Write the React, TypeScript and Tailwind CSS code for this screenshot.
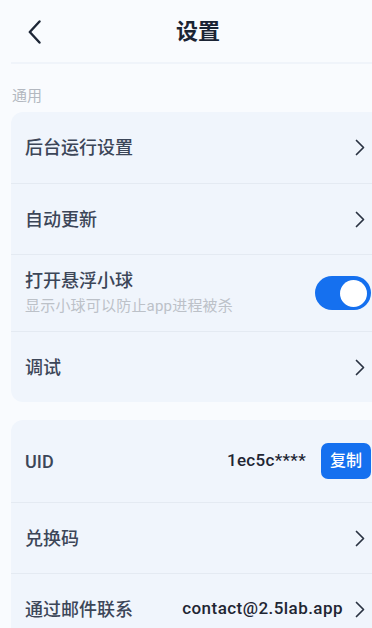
import React, { useState } from 'react';

const font = { fontFamily: 'Roboto, "Noto Sans CJK SC", sans-serif' };

function Chevron({ className = '' }: { className?: string }) {
  return (
    <svg width="10" height="17" viewBox="0 0 10 17" fill="none" className={className}>
      <path d="M1.5 1.5L8.5 8.5L1.5 15.5" stroke="#2a3342" strokeWidth="1.7" strokeLinecap="round" strokeLinejoin="round" />
    </svg>
  );
}

function Row({ label, right, h = 'h-[71px]', first = false }: { label: string; right?: React.ReactNode; h?: string; first?: boolean }) {
  return (
    <div className={`flex items-center justify-between pl-[14px] pr-[14px] ${h} ${first ? '' : 'border-t border-[#e4eaf2]'}`}>
      <span className="text-[18px] font-medium text-[#3c4658]">{label}</span>
      {right ?? <Chevron className="mr-[6px]" />}
    </div>
  );
}

export default function App() {
  const [floating, setFloating] = useState(true);

  return (
    <div className="w-full h-[628px] overflow-hidden bg-[#f9fbfe]" style={font}>
      <div className="w-[396px]">
        {/* header */}
        <div className="grid grid-cols-[60px_1fr_60px] items-center h-[62px]">
          <div className="pl-[28px] pt-[1px]">
            <svg width="13" height="24" viewBox="0 0 13 24" fill="none">
              <path d="M11.5 1.5L1.8 12L11.5 22.5" stroke="#1d2636" strokeWidth="2.4" strokeLinecap="round" strokeLinejoin="round" />
            </svg>
          </div>
          <h1 className="text-center text-[22px] font-bold text-[#1b2434]">设置</h1>
          <div />
        </div>
        <div className="mx-[11px] h-[2px] bg-[#f0f4fa]" />

        <div className="px-[12px] pt-[22px] pb-[6px] text-[15px] leading-[20px] text-[#b3b8c0]">通用</div>

        <div className="mx-[11px] rounded-[12px] bg-[#f0f5fc]">
          <Row label="后台运行设置" first />
          <Row label="自动更新" />
          <div className="flex items-center justify-between h-[77px] pl-[14px] pr-[14px] border-t border-[#e4eaf2]">
            <div className="flex flex-col gap-[3px] -mt-[2px]">
              <span className="text-[18px] leading-[24px] font-medium text-[#3c4658]">打开悬浮小球</span>
              <span className="text-[15px] leading-[20px] text-[#bcc1c8] tracking-[0.2px]">显示小球可以防止app进程被杀</span>
            </div>
            <button
              onClick={() => setFloating(!floating)}
              className={`flex items-center w-[56px] h-[34px] rounded-full px-[4px] ${floating ? 'bg-[#1570ef] justify-end' : 'bg-[#d5dbe3] justify-start'}`}
            >
              <span className="block w-[27px] h-[27px] rounded-full bg-white" />
            </button>
          </div>
          <Row label="调试" />
        </div>

        <div className="mx-[11px] mt-[18px] rounded-[12px] bg-[#f0f5fc]">
          <Row
            label="UID"
            first
            h="h-[82px]"
            right={
              <div className="flex items-center gap-[15px]">
                <span className="text-[17px] font-medium text-[#1f2633] tracking-[0.3px]">1ec5c****</span>
                <button className="w-[50px] h-[36px] rounded-[7px] bg-[#1570ef] text-white text-[16px] font-medium">复制</button>
              </div>
            }
          />
          <Row label="兑换码" />
          <Row
            label="通过邮件联系"
            right={
              <div className="flex items-center gap-[12px] mr-[6px]">
                <span className="text-[17px] font-medium text-[#1f2633] tracking-[0.45px]">contact@2.5lab.app</span>
                <Chevron />
              </div>
            }
          />
        </div>
      </div>
    </div>
  );
}
